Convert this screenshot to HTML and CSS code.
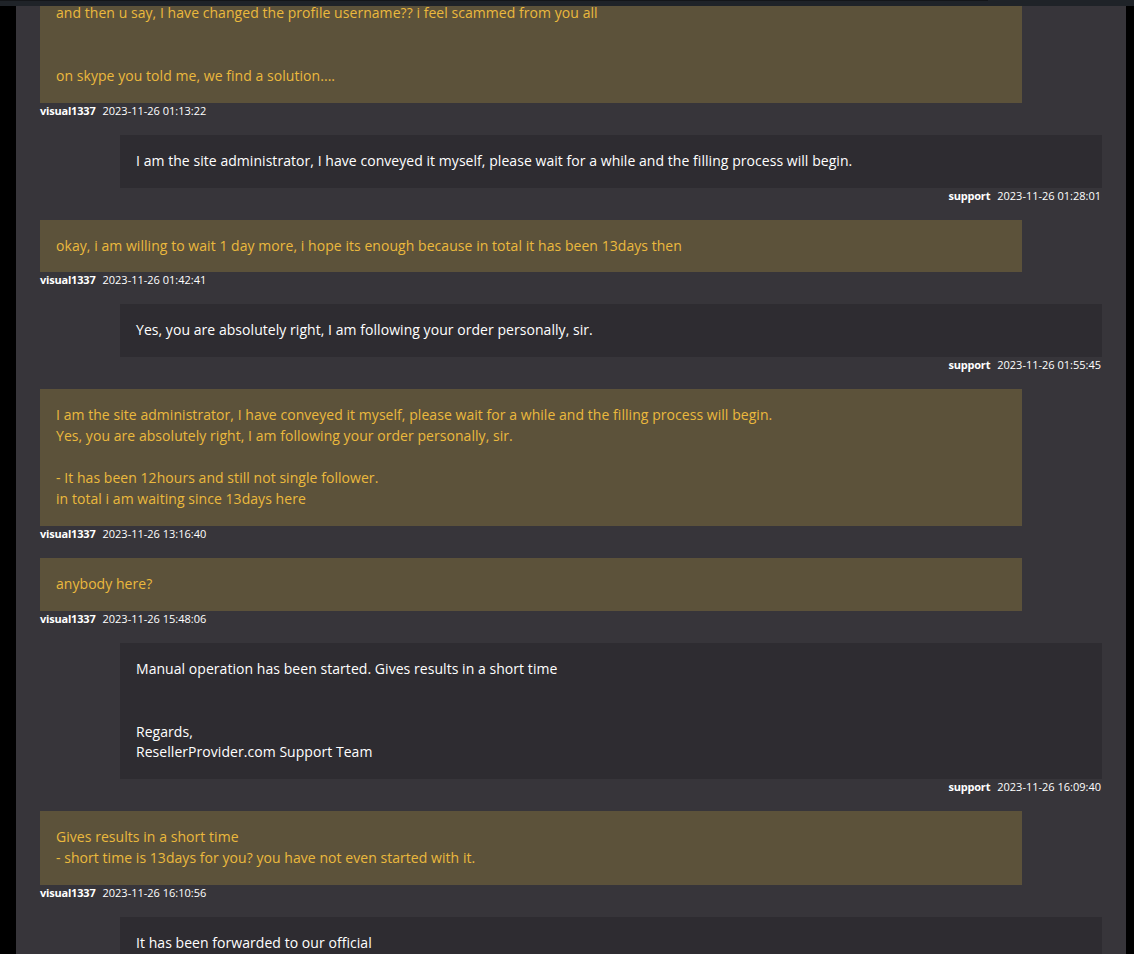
FILE: index.html
```html
<!DOCTYPE html>
<html>
<head>
<meta charset="utf-8">
<link rel="stylesheet" href="styles.css">
</head>
<body>
<div class="topbar"><div class="topbar-line"></div></div>
<div class="panel">
  <div class="thread">
    <div class="msg user">
      <div class="bubble">and then u say, I have changed the profile username?? i feel scammed from you all<br><br><br>on skype you told me, we find a solution....</div>
      <div class="meta"><b>visual1337</b><span>2023-11-26 01:13:22</span></div>
    </div>
    <div class="msg support">
      <div class="bubble">I am the site administrator, I have conveyed it myself, please wait for a while and the filling process will begin.</div>
      <div class="meta"><b>support</b><span>2023-11-26 01:28:01</span></div>
    </div>
    <div class="msg user">
      <div class="bubble">okay, i am willing to wait 1 day more, i hope its enough because in total it has been 13days then</div>
      <div class="meta"><b>visual1337</b><span>2023-11-26 01:42:41</span></div>
    </div>
    <div class="msg support">
      <div class="bubble">Yes, you are absolutely right, I am following your order personally, sir.</div>
      <div class="meta"><b>support</b><span>2023-11-26 01:55:45</span></div>
    </div>
    <div class="msg user">
      <div class="bubble">I am the site administrator, I have conveyed it myself, please wait for a while and the filling process will begin.<br>Yes, you are absolutely right, I am following your order personally, sir.<br><br>- It has been 12hours and still not single follower.<br>in total i am waiting since 13days here</div>
      <div class="meta"><b>visual1337</b><span>2023-11-26 13:16:40</span></div>
    </div>
    <div class="msg user">
      <div class="bubble">anybody here?</div>
      <div class="meta"><b>visual1337</b><span>2023-11-26 15:48:06</span></div>
    </div>
    <div class="msg support">
      <div class="bubble">Manual operation has been started. Gives results in a short time<br><br><br>Regards,<br>ResellerProvider.com Support Team</div>
      <div class="meta"><b>support</b><span>2023-11-26 16:09:40</span></div>
    </div>
    <div class="msg user">
      <div class="bubble">Gives results in a short time<br>- short time is 13days for you? you have not even started with it.</div>
      <div class="meta"><b>visual1337</b><span>2023-11-26 16:10:56</span></div>
    </div>
    <div class="msg support">
      <div class="bubble">It has been forwarded to our official<br>team and will be started shortly.</div>
      <div class="meta"><b>support</b><span>2023-11-26 16:20:12</span></div>
    </div>
  </div>
</div>
</body>
</html>
```

FILE: styles.css
```css
html, body {
  margin: 0;
  padding: 0;
  background: #000;
  height: 954px;
  overflow: hidden;
}
body {
  font-family: "Open Sans", "Liberation Sans", Arial, sans-serif;
  display: flex;
  flex-direction: column;
}
.topbar {
  height: 6px;
  background: #1f2328;
  flex: none;
  position: relative;
  z-index: 2;
}
.topbar-line {
  width: 988px;
  height: 1px;
  background: #141619;
}
.panel {
  margin: 0 8px 0 16px;
  background: #37353a;
  flex: 1;
  overflow: hidden;
  padding: 0 24px;
}
.thread {
  margin-top: -19px;
  display: flex;
  flex-direction: column;
}
.msg {
  display: flex;
  flex-direction: column;
  margin-bottom: 16px;
}
.bubble {
  padding: 16px;
  font-size: 14px;
  line-height: 20.9px;
  font-weight: 500;
  letter-spacing: 0.05px;
  width: 950px;
}
.user .bubble {
  background: #5c523a;
  color: #ebb93d;
}
.support {
  align-items: flex-end;
}
.support .bubble {
  background: #2e2c31;
  color: #fff;
}
.meta {
  height: 16px;
  line-height: 16px;
  font-size: 11px;
  color: #fff;
  display: flex;
  gap: 7px;
}
.support .meta {
  padding-right: 1px;
}
.meta b {
  font-weight: 700;
  letter-spacing: -0.2px;
}
.meta span {
  font-weight: 500;
}
```
